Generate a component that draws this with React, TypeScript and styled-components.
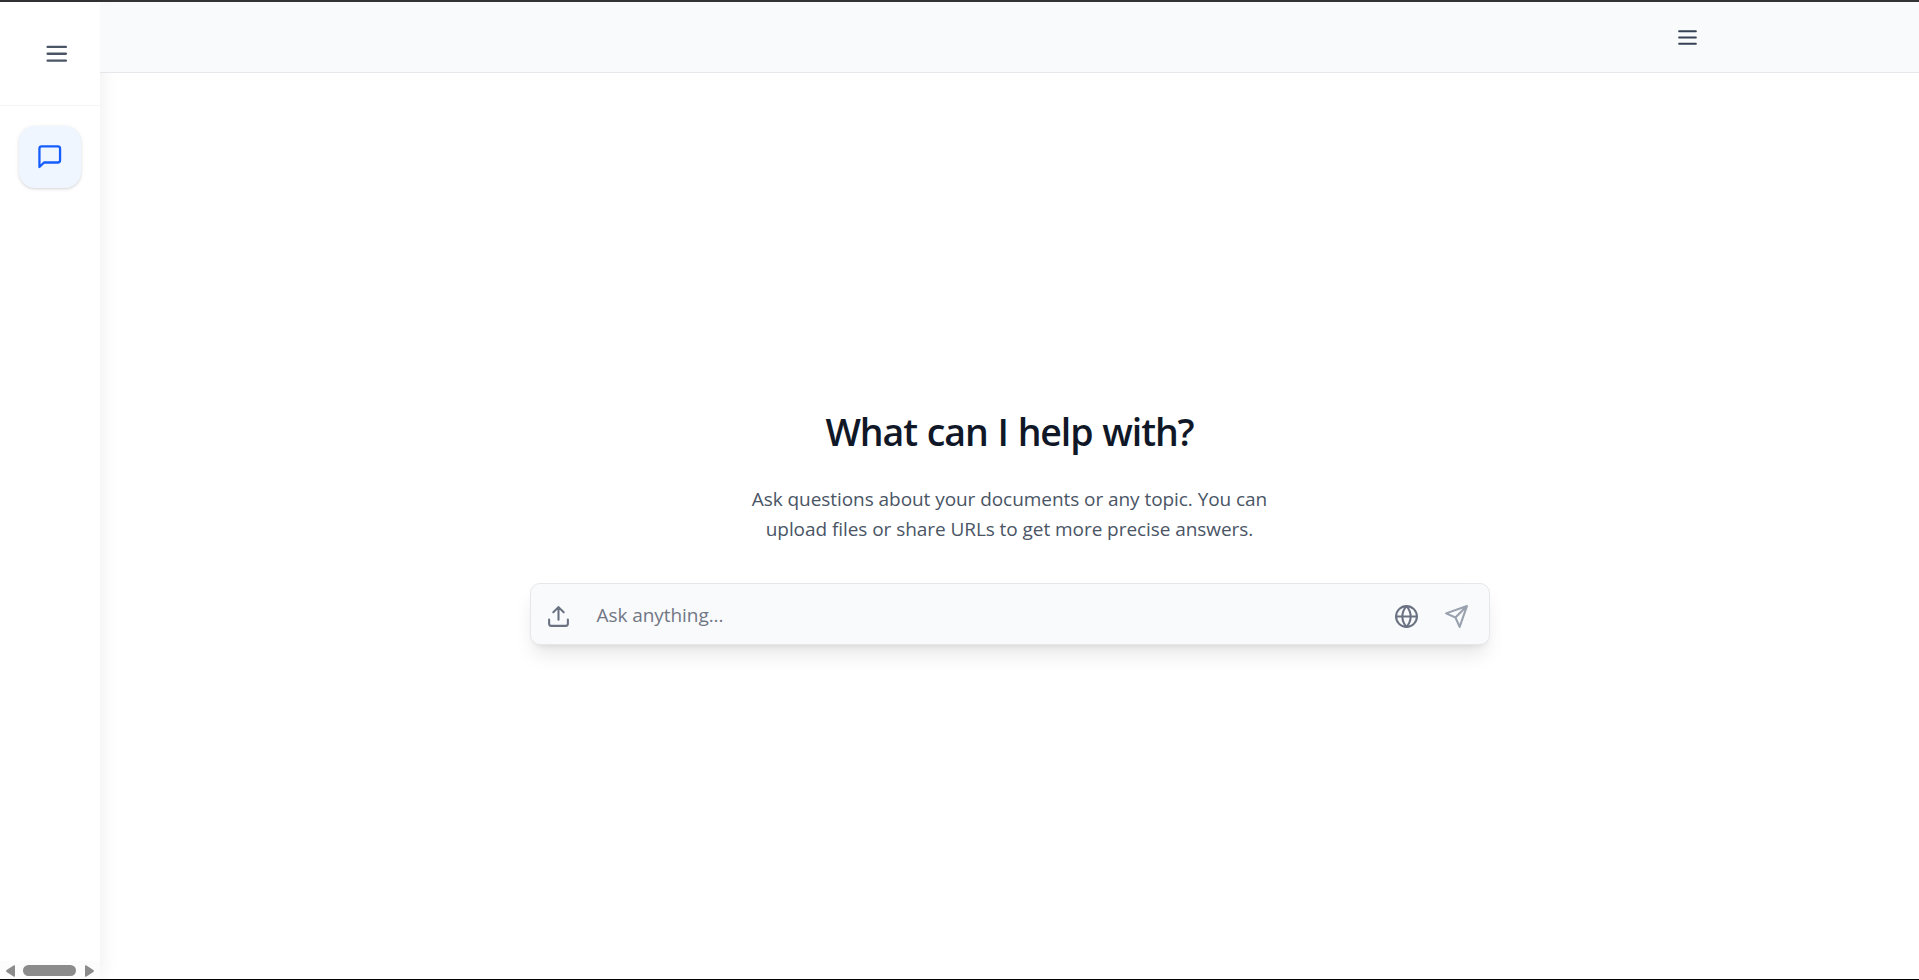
import React from 'react'
import styled, { createGlobalStyle } from 'styled-components'

interface IIconProps {
  size: number
  color: string
  children: React.ReactNode
}

const GlobalStyle = createGlobalStyle`
  *, *::before, *::after {
    box-sizing: border-box;
  }

  body {
    margin: 0;
    background: #ffffff;
    font-family: "Segoe UI", "Open Sans", "Noto Sans", sans-serif;
    overflow: hidden;
  }

  button {
    padding: 0;
    border: none;
    background: none;
    display: flex;
    align-items: center;
    justify-content: center;
  }
`

const SApp = styled.div`
  height: 980px;
  display: flex;
  border-top: 2px solid #333336;
  border-bottom: 1px solid #000000;
`

const SSidebar = styled.aside`
  width: 100px;
  flex-shrink: 0;
  display: flex;
  flex-direction: column;
  background: #ffffff;
  box-shadow: 0 0 19px rgba(0, 0, 0, 0.08);
  z-index: 1;
`

const SSidebarTop = styled.div`
  height: 104px;
  padding-left: 13px;
  display: flex;
  align-items: center;
  justify-content: center;
  border-bottom: 1px solid #f3f4f6;
`

const SNav = styled.nav`
  flex: 1;
  padding: 19.5px 18.75px;
`

const SNavButton = styled.button`
  width: 62.5px;
  height: 62.5px;
  border-radius: 16px;
  && {
    padding-bottom: 1px;
    background: #eff6ff;
  }
  box-shadow: 0 1px 4px rgba(0, 0, 0, 0.1), 0 1px 2px rgba(0, 0, 0, 0.08);
`

const SScrollbar = styled.div`
  height: 18px;
  padding: 1px 6px 0 6px;
  display: flex;
  align-items: center;
  justify-content: space-between;
  background: #fcfcfc;
`

const SThumb = styled.div`
  width: 53px;
  height: 11px;
  margin-right: 1px;
  border-radius: 6px;
  background: #8b8b8b;
`

const SMain = styled.main`
  flex: 1;
  display: flex;
  flex-direction: column;
`

const SHeader = styled.header`
  position: relative;
  z-index: 2;
  height: 71px;
  padding-right: 219px;
  display: flex;
  align-items: center;
  justify-content: flex-end;
  background: #f9fafc;
  border-bottom: 1px solid #e5e7eb;
`

const SContent = styled.div`
  flex: 1;
  padding-top: 334px;
  display: flex;
  flex-direction: column;
  align-items: center;
`

const STitle = styled.h1`
  margin: 0;
  font-size: 37.5px;
  line-height: 50px;
  font-weight: 600;
  letter-spacing: -1.1px;
  word-spacing: 1.2px;
  color: #101828;
  white-space: nowrap;
`

const SSubtitle = styled.p`
  margin: 27px 0 0;
  font-size: 19px;
  line-height: 30px;
  letter-spacing: -0.06px;
  text-align: center;
  color: #4a5565;
  white-space: nowrap;
`

const SInputBar = styled.div`
  width: 960px;
  height: 62px;
  margin-top: 39px;
  padding: 4px 20px 0 15px;
  display: flex;
  align-items: center;
  background: #f9fafc;
  border: 1px solid #e5e7eb;
  border-radius: 10px;
  box-shadow: 0 12.5px 18.75px -3.75px rgba(0, 0, 0, 0.1), 0 5px 7.5px -5px rgba(0, 0, 0, 0.1);
`

const SPlaceholder = styled.span`
  flex: 1;
  margin: -2px 0 0 26px;
  font-size: 19px;
  line-height: 30px;
  letter-spacing: -0.06px;
  color: #717784;
`

const SActions = styled.div`
  display: flex;
  gap: 25px;
`

const Icon: React.FC<IIconProps> = ({ size, color, children }) => (
  <svg
    width={size}
    height={size}
    viewBox="0 0 24 24"
    fill="none"
    stroke={color}
    strokeWidth="2"
    strokeLinecap="round"
    strokeLinejoin="round"
  >
    {children}
  </svg>
)

const MenuLines: React.FC = () => <path d="M4 6h16M4 12h16M4 18h16" />

const App: React.FC = () => {
  return (
    <>
      <GlobalStyle />
      <SApp>
        <SSidebar>
          <SSidebarTop>
            <button aria-label="Toggle sidebar">
              <Icon size={27.5} color="#4a5565"><MenuLines /></Icon>
            </button>
          </SSidebarTop>
          <SNav>
            <SNavButton aria-label="Chat">
              <Icon size={27.5} color="#155dfc">
                <path d="M21 15a2 2 0 0 1-2 2H7l-4 4V5a2 2 0 0 1 2-2h14a2 2 0 0 1 2 2z" />
              </Icon>
            </SNavButton>
          </SNav>
          <SScrollbar>
            <svg width="9" height="12" viewBox="0 0 9 12" fill="#8b8b8b">
              <path d="M9 1v10q0 1-1 .7L.6 7Q-.4 6 .6 5L8 .3Q9 0 9 1z" />
            </svg>
            <SThumb />
            <svg width="9" height="12" viewBox="0 0 9 12" fill="#8b8b8b">
              <path d="M0 1v10q0 1 1 .7L8.400 7Q9.400 6 8.400 5L1 .3Q0 0 0 1z" />
            </svg>
          </SScrollbar>
        </SSidebar>
        <SMain>
          <SHeader>
            <button aria-label="Menu">
              <Icon size={25} color="#364153"><MenuLines /></Icon>
            </button>
          </SHeader>
          <SContent>
            <STitle>What can I help with?</STitle>
            <SSubtitle>
              Ask questions about your documents or any topic. You can
              <br />
              upload files or share URLs to get more precise answers.
            </SSubtitle>
            <SInputBar>
              <button aria-label="Upload">
                <Icon size={25} color="#6a7282">
                  <path d="M21 15v4a2 2 0 0 1-2 2H5a2 2 0 0 1-2-2v-4M17 8l-5-5-5 5M12 3v12" />
                </Icon>
              </button>
              <SPlaceholder>Ask anything...</SPlaceholder>
              <SActions>
                <button aria-label="Web search">
                  <Icon size={25} color="#6a7282">
                    <circle cx="12" cy="12" r="10" />
                    <path d="M12 2a15.300 15.300 0 0 1 4 10 15.300 15.300 0 0 1-4 10 15.300 15.300 0 0 1-4-10 15.300 15.300 0 0 1 4-10zM2 12h20" />
                  </Icon>
                </button>
                <button aria-label="Send">
                  <Icon size={25} color="#99a1af">
                    <path d="M22 2 11 13M22 2l-7 20-4-9-9-4Z" />
                  </Icon>
                </button>
              </SActions>
            </SInputBar>
          </SContent>
        </SMain>
      </SApp>
    </>
  )
}

export default App
